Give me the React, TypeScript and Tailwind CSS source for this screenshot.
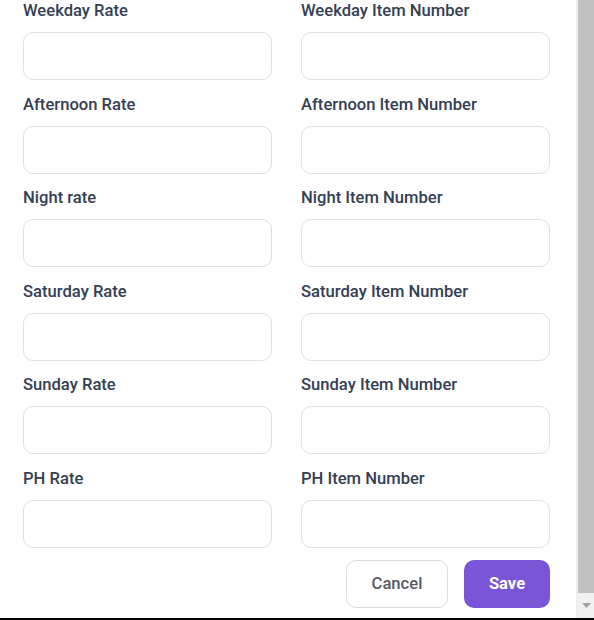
const rows = [
  ["Weekday Rate", "Weekday Item Number"],
  ["Afternoon Rate", "Afternoon Item Number"],
  ["Night rate", "Night Item Number"],
  ["Saturday Rate", "Saturday Item Number"],
  ["Sunday Rate", "Sunday Item Number"],
  ["PH Rate", "PH Item Number"],
];

function Field({ label }: { label: string }) {
  return (
    <div className="flex flex-col">
      <label className="text-[16.6px] leading-[21px] font-medium text-[#344054]">{label}</label>
      <input
        type="text"
        className="mt-[11px] h-12 w-full rounded-[10px] border border-[#dfdfe6] bg-white px-3 outline-none"
      />
    </div>
  );
}

export default function App() {
  return (
    <div className="flex h-[620px] w-[594px] flex-col bg-white font-['Roboto',sans-serif]">
      <div className="flex min-h-0 flex-1">
        <div className="flex-1 pl-[23px] pr-[26px]">
          <div className="grid grid-cols-2 gap-x-[29px] gap-y-[13.6px]">
            {rows.map(([a, b]) => (
              <>
                <Field key={a} label={a} />
                <Field key={b} label={b} />
              </>
            ))}
          </div>
          <div className="mt-3 flex justify-end gap-4">
            <button className="h-12 w-[102px] rounded-[10px] border border-[#dcdce4] bg-white pt-px text-[16.6px] font-medium text-[#555b65]">
              Cancel
            </button>
            <button className="h-12 w-[86px] rounded-[10px] bg-[#7b55d8] pt-px text-[16.6px] font-bold text-white">
              Save
            </button>
          </div>
        </div>
        {/* scrollbar */}
        <div className="flex w-[18px] flex-col border-l border-[#ececec] bg-[#f1f1f1] pl-[1px]">
          <div className="h-[593px] w-[16px] bg-[#c1c1c1]" />
          <div className="flex flex-1 items-center justify-center">
            <svg width="9" height="6" viewBox="0 0 9 6">
              <path d="M0 0h9L4.5 5z" fill="#a3a3a3" />
            </svg>
          </div>
        </div>
      </div>
      <div className="h-[2px] bg-black" />
    </div>
  );
}
